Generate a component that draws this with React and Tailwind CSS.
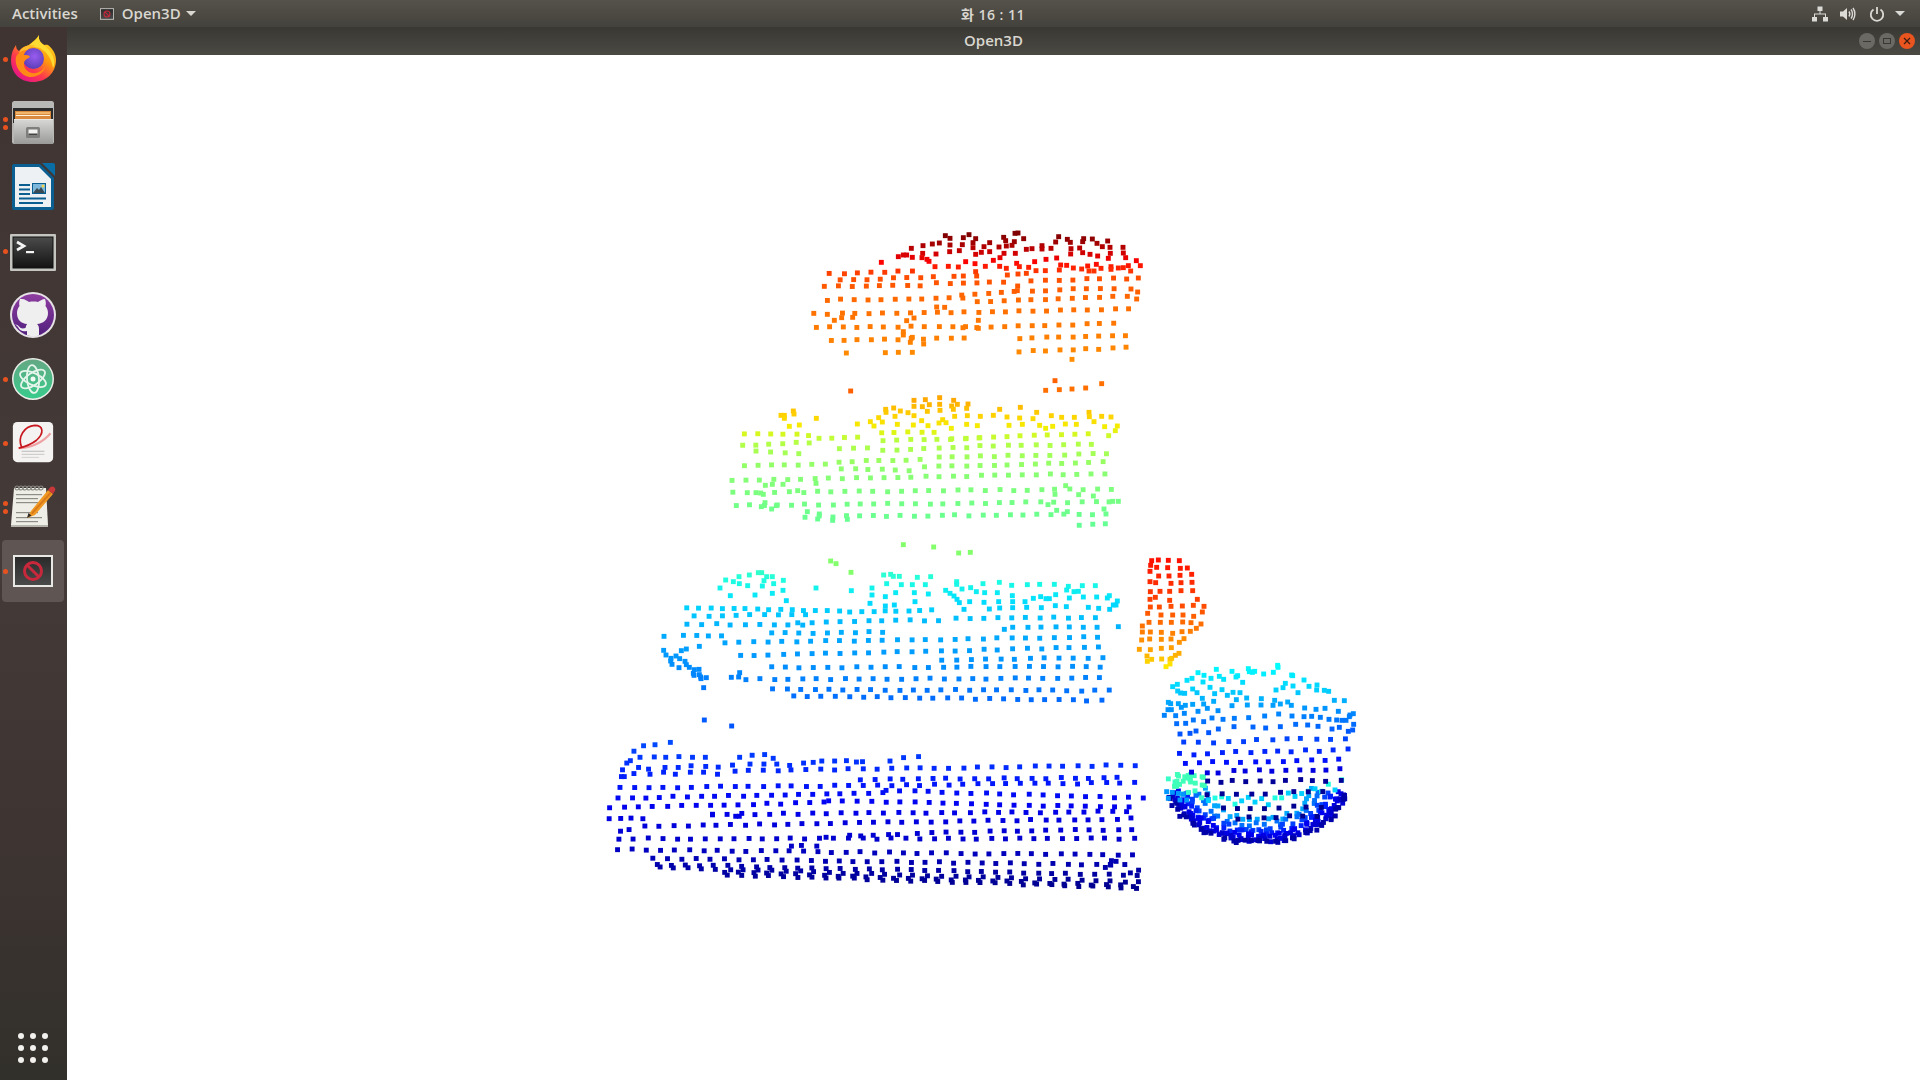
import { useMemo } from 'react';

// seeded random so the cloud stays the same between renders
const makeRandom = (seed) => () => {
  seed = (seed + 0x6d2b79f5) | 0;
  let t = Math.imul(seed ^ (seed >>> 15), 1 | seed);
  t = (t + Math.imul(t ^ (t >>> 7), 61 | t)) ^ t;
  return ((t ^ (t >>> 14)) >>> 0) / 4294967296;
};

const hex = (c) => [1, 3, 5].map((i) => parseInt(c.slice(i, i + 2), 16));

const ramp = (stops, v) => {
  if (v <= stops[0][0]) return stops[0][1];
  for (let i = 1; i < stops.length; i++) {
    if (v <= stops[i][0]) {
      const [a, ca] = stops[i - 1];
      const [b, cb] = stops[i];
      const k = (v - a) / (b - a);
      const x = hex(ca);
      const y = hex(cb);
      return `rgb(${x.map((n, j) => Math.round(n + (y[j] - n) * k)).join(',')})`;
    }
  }
  return stops[stops.length - 1][1];
};

const mainStops = [
  [235, '#800000'], [250, '#c00000'], [262, '#ff0000'], [275, '#ff4a00'], [300, '#ff6a00'], [345, '#ff8400'],
  [400, '#ffa800'], [415, '#ffd000'], [428, '#f4f000'], [440, '#b8ff40'], [470, '#8cff70'], [530, '#60ff98'],
  [565, '#40ffb8'], [580, '#20ffe0'], [600, '#00e0ff'], [625, '#00b4ff'], [665, '#0090ff'], [705, '#0064ff'],
  [745, '#0048ff'], [775, '#0020ff'], [805, '#0000f0'], [845, '#0000c8'], [887, '#000090'],
];
const towerStops = [[560, '#ff1000'], [600, '#ff4000'], [625, '#ff7000'], [645, '#ff9800'], [655, '#ffb000'], [665, '#ffe800']];
const bowlStops = [[665, '#00ffff'], [690, '#00d0ff'], [710, '#0090ff'], [735, '#0050ff'], [760, '#0010ff'], [790, '#0000e8'], [800, '#0000c8']];

const blockA = {
  ox: 800, oy: 220, sx: 3, sy: 3,
  pts: [[244,127],[295,110],[310,105],[320,105],[337,112],[334,85],[368,100],[369,77],[366,113],[381,118],[387,124],[408,102],[397,72],[418,69],[436,47],[450,55],[450,75],[449,95],[478,92],[487,74],[490,53],[507,44],[527,56],[519,68],[519,83],[527,103],[544,97],[552,80],[569,68],[569,95],[597,81],[611,52],[617,62],[619,78],[612,100],[600,113],[636,76],[643,65],[645,40],[654,39],[671,56],[646,100],[679,88],[696,86],[726,77],[726,87],[753,85],[767,66],[776,50],[802,58],[811,67],[813,86],[812,102],[839,84],[848,98],[848,65],[851,56],[877,57],[891,70],[907,80],[923,63],[930,82],[931,100],[925,115],[893,108],[870,103],[969,82],[970,99],[977,113],[1009,122],[1021,137],[985,137],[770,114],[738,118],[704,125],[650,130],[580,121],[497,125],[525,131],[556,139],[599,139],[619,145],[658,140],[686,142],[405,140],[445,139],[475,141],[782,135],[800,136],[820,144],[845,147],[863,138],[889,133],[903,145],[933,140],[955,144],[970,143],[992,153],[933,148],[778,150],[867,153],[882,153],[736,152],[708,152],[679,160],[654,162],[622,165],[527,155],[530,168],[490,168],[462,169],[400,170],[139,399],[256,398],[295,397],[337,397],[816,418],[535,301],[535,325],[410,261],[434,262],[103,301],[125,293],[158,292],[320,302],[342,294],[310,335],[310,345],[337,352],[331,367],[371,372],[1015,174],[980,177],[1013,216],[993,207],[1010,237],[982,229],[653,198],[652,212]],
  rows: [[90,365,162,152,41],[122,365,180,172,40],[695,945,181,176,41],[75,365,198,197,41],[410,610,190,185,40],[695,950,212,204,41],[485,650,224,216,40],[80,490,240,233,41],[530,970,244,230,41],[43,615,282,275,41],[617,1015,274,265,41],[47,500,322,318,41],[490,945,323,310,41],[92,495,360,355,40],[658,1015,355,345,40],[658,1012,395,382,40]],
};

const blockB = {
  ox: 720, oy: 370, sx: 3, sy: 3,
  pts: [[183,136],[193,136],[193,145],[220,123],[222,132],[289,145],[208,169],[238,165],[412,162],[451,155],[462,168],[476,143],[487,156],[497,118],[498,127],[521,114],[541,123],[564,128],[525,139],[582,137],[582,91],[582,109],[607,110],[616,89],[628,104],[622,124],[659,83],[659,103],[660,121],[701,91],[695,108],[712,103],[700,118],[744,102],[740,115],[605,152],[532,163],[580,165],[624,167],[657,159],[668,149],[678,158],[704,139],[742,137],[740,163],[694,175],[772,167],[781,139],[820,136],[839,118],[861,141],[901,112],[899,144],[939,146],[950,127],[994,137],[1025,142],[1063,142],[1107,127],[1108,140],[1145,139],[1173,141],[1122,155],[1036,162],[1069,163],[998,169],[977,175],[959,166],[907,163],[867,166],[1154,170],[1192,168],[1186,182],[1166,197],[136,346],[157,343],[189,343],[288,340],[233,362],[108,368],[130,373],[135,398],[169,407],[155,417],[124,410],[1005,373],[1037,347],[1076,374],[1120,378],[1010,421],[1042,425],[1152,417],[1178,394],[1195,394],[984,404],[298,432],[262,425],[293,447],[338,451],[382,448]],
  rows: [[73,272,192,195,39],[295,450,205,200,40],[484,655,187,188,40],[696,1118,205,190,41],[68,268,226,217,40],[488,780,212,205,41],[780,1155,228,222,42],[110,238,243,250,42],[358,445,235,233,42],[487,780,240,232,42],[656,1188,262,250,42],[72,320,287,283,41],[355,610,275,270,41],[616,1185,290,275,41],[364,584,296,302,41],[35,1190,330,310,41.5],[40,1192,368,357,42],[48,1190,406,395,41.5],[255,1190,440,432,41],[1076,1186,466,458,41]],
};

const blockC = {
  ox: 650, oy: 540, sx: 3, sy: 3,
  pts: [[227,120],[250,125],[267,110],[298,105],[325,98],[335,98],[350,110],[367,110],[400,121],[342,122],[268,131],[293,137],[337,138],[371,131],[210,144],[241,167],[315,165],[367,160],[399,151],[409,182],[498,144],[604,152],[666,144],[666,165],[706,170],[737,158],[793,158],[835,162],[710,131],[754,134],[787,134],[826,134],[701,105],[722,103],[730,109],[748,109],[802,112],[842,110],[920,125],[920,133],[936,147],[962,143],[979,155],[1004,158],[1042,158],[999,131],[1048,127],[1085,136],[1132,134],[1169,133],[1213,133],[1255,139],[1297,137],[1336,137],[1250,150],[1272,155],[1285,154],[1087,167],[1150,175],[1172,170],[1188,176],[1198,176],[1217,164],[1258,174],[1300,171],[1340,171],[1372,174],[1378,167],[1402,183],[1398,195],[1390,195],[887,151],[900,160],[912,168],[921,178],[928,188],[959,185],[1002,187],[1046,185],[1088,185],[1125,185],[660,190],[706,198],[733,195],[795,185],[942,208],[1018,207],[1049,204],[1088,203],[1130,202],[1174,203],[1216,197],[1249,200],[1315,202],[1346,205],[1379,208],[1405,260],[1063,268],[42,289],[41,331],[48,345],[63,355],[78,348],[89,356],[62,363],[66,373],[87,383],[105,364],[109,374],[118,382],[133,389],[147,388],[130,400],[132,406],[148,404],[152,411],[153,416],[169,413],[161,443],[94,332],[109,327],[148,319],[163,540],[245,558],[244,412],[266,411],[269,398]],
  rows: [[112,600,205,212,35],[600,870,215,210,35],[133,480,228,222,42],[918,1345,235,232,42],[445,875,247,240,42],[113,490,252,255,43],[1090,1380,260,262,42],[363,740,280,275,42],[100,225,285,290,38],[225,1380,308,290,43],[270,1385,347,320,43],[875,1385,360,352,44],[363,1380,382,380,43],[287,1380,418,414,42.5],[370,1380,448,452,42],[430,1376,468,482,42]],
};

const blockD = {
  ox: 600, oy: 720, sx: 2.8, sy: 2.95,
  pts: [[197,66],[154,73],[122,76],[95,92],[112,110],[152,109],[184,110],[221,108],[259,110],[295,110],[85,120],[75,127],[391,110],[426,104],[461,102],[485,113],[108,140],[63,147],[60,167],[68,167],[136,145],[182,140],[219,140],[255,135],[296,137],[331,139],[371,133],[420,130],[459,130],[495,130],[531,134],[570,127],[597,125],[621,121],[657,121],[690,120],[718,124],[735,123],[812,121],[850,111],[892,108],[95,158],[140,160],[178,154],[211,160],[253,154],[290,154],[329,160],[1432,415],[1445,417],[1430,428],[1415,435],[1485,451],[1508,443],[380,284],[390,284],[315,278],[633,346],[699,340],[730,342],[765,340],[808,338],[833,338],[536,372],[564,370],[607,372]],
  rows: [[377,1500,150,133,40],[730,1480,175,170,40],[57,1520,200,185,40],[50,800,230,215,39],[800,1520,208,230,40],[28,640,258,243,40],[640,1490,238,258,40],[315,1490,278,270,40],[25,150,292,290,32],[127,1525,314,290,40],[55,100,328,322,25],[55,1528,350,350,40],[890,1495,333,322,40],[50,1500,382,399,40],[150,1500,408,428,40],[160,1510,426,458,39.5],[166,1516,434,478,39.5],[350,1510,448,490,39.5],[355,1516,456,496,39.5]],
};

const towerPts = [[65,32],[85,30],[115,31],[148,32],[62,46],[80,52],[113,53],[151,55],[172,54],[60,64],[86,78],[117,78],[150,76],[185,73],[60,95],[77,98],[123,100],[153,98],[186,97],[61,125],[90,124],[119,124],[153,122],[188,122],[60,148],[76,142],[119,151],[202,148],[61,171],[88,171],[123,169],[157,168],[190,166],[222,169],[53,190],[93,195],[128,195],[159,195],[191,199],[217,186],[57,217],[91,217],[124,217],[158,216],[183,218],[213,222],[37,228],[37,246],[61,246],[94,247],[128,250],[156,245],[181,244],[199,235],[35,270],[59,267],[94,268],[123,267],[162,266],[148,277],[28,298],[61,299],[94,295],[124,293],[51,318],[65,328],[52,334],[95,327],[120,328],[125,325],[136,316],[147,310],[120,342],[108,350]];

const bowlPts = [[128,410],[142,403],[171,391],[186,385],[204,368],[222,376],[219,396],[243,385],[259,358],[268,379],[281,388],[306,364],[318,381],[323,377],[338,397],[355,356],[358,365],[367,367],[374,364],[401,372],[430,367],[444,352],[443,346],[485,375],[488,377],[522,390],[466,400],[459,413],[438,420],[489,408],[504,428],[537,409],[561,405],[560,420],[583,421],[596,424],[613,451],[643,452],[143,423],[152,429],[164,430],[188,417],[201,428],[240,412],[276,419],[254,431],[217,445],[330,428],[309,427],[292,436],[319,449],[350,444],[394,446],[434,451],[473,456],[524,474],[558,478],[585,475],[625,484],[115,457],[122,461],[145,461],[166,466],[154,472],[188,463],[221,462],[251,454],[232,475],[204,484],[264,482],[306,467],[352,465],[393,465],[429,466],[451,462],[484,466],[114,479],[124,479],[103,496],[137,497],[163,490],[190,510],[221,515],[246,504],[279,508],[313,505],[356,503],[404,498],[446,492],[486,498],[522,500],[545,499],[571,502],[597,508],[620,510],[636,511],[648,511],[660,495],[670,491],[658,500],[671,523],[668,540],[655,544],[628,532],[606,537],[564,529],[533,525],[497,523],[451,530],[407,534],[369,531],[312,530],[265,537],[236,548],[198,543],[180,550],[150,552],[140,521],[167,520]];

// fixed colours: stray points that do not follow the height ramp
const strays = [
  ...[[392,63],[1005,32]].map(([x, y]) => [720 + x / 3, 370 + y / 3, '#ff6000']),
  ...[[977,61],[1018,59],[1056,57],[1097,54],[1145,41]].map(([x, y]) => [720 + x / 3, 370 + y / 3, '#ff7000']),
  ...[[760,14],[851,21],[926,39],[961,37],[542,63],[558,71],[603,97]].map(([x, y]) => [650 + x / 3, 540 + y / 3, '#84ff6c']),
];

const buildCloud = () => {
  const rnd = makeRandom(7);
  const out = [];
  const jig = (n) => (rnd() - 0.5) * n;
  for (const b of [blockA, blockB, blockC, blockD]) {
    const all = [...b.pts];
    for (const [x0, x1, y0, y1, step] of b.rows) {
      for (let x = x0; x <= x1; x += step) {
        const k = (x - x0) / Math.max(1, x1 - x0);
        all.push([x + jig(5), y0 + (y1 - y0) * k + jig(4)]);
      }
    }
    for (const [x, y] of all) {
      const py = b.oy + y / b.sy;
      out.push([b.ox + x / b.sx, py, ramp(mainStops, py)]);
    }
  }
  for (const [x, y] of towerPts) {
    const py = 550 + y / 3;
    out.push([1130 + x / 3, py, ramp(towerStops, py)]);
  }
  const bowl = [...bowlPts];
  for (const [x0, x1, y0, y1, step] of [[162,665,578,565,44],[150,660,612,600,42],[165,640,640,630,42]]) {
    for (let x = x0; x <= x1; x += step) {
      bowl.push([x + jig(6), y0 + (y1 - y0) * ((x - x0) / (x1 - x0)) + jig(8)]);
    }
  }
  for (const [x, y] of bowl) {
    const py = 550 + y / 3;
    out.push([1130 + x / 3, py, ramp(bowlStops, py)]);
  }
  // lower cup, rings from the inner wall out to the dark bottom edge
  for (const [k, c, n] of [[0.62,'#00a8ff',20],[0.7,'#0070ff',22],[0.78,'#0040ff',26],[0.84,'#0020ff',28],[0.89,'#0000f0',32],[0.93,'#0000e0',36],[0.965,'#0000d0',38],[1,'#0000a8',42]]) {
    for (let i = 0; i <= n; i++) {
      const a = 0.2 + ((Math.PI - 0.4) * i) / n + jig(0.08);
      out.push([1130 + (385 + 270 * k * Math.cos(a) + jig(14)) / 3, 550 + (700 + 178 * k * Math.sin(a) + jig(14)) / 3, c]);
    }
  }
  // teal rim that bends down in front of the bowl
  for (let x = 115; x <= 640; x += 20) {
    const y = 700 + 55 * Math.sin((Math.PI * (x - 105)) / 540) + jig(34);
    const c = x < 230 ? '#38ffc8' : rnd() > 0.5 ? '#20ffe0' : '#00d0ff';
    out.push([1130 + x / 3, 550 + y / 3, c]);
  }
  for (let i = 0; i < 24; i++) {
    out.push([1130 + (130 + rnd() * 95) / 3, 550 + (668 + rnd() * 42) / 3, '#40ffb8']);
  }
  for (const [x, y] of [[110,725],[127,727],[145,730],[115,745],[150,750],[170,750],[160,733]]) {
    out.push([1130 + x / 3, 550 + y / 3, '#0098ff']);
  }
  // dark points of the back wall seen through the rim
  for (const [x0, x1, y0, y1, step, c] of [[188,640,668,655,40,'#0000e0'],[230,640,695,690,40,'#000098'],[230,620,735,725,44,'#000098'],[280,600,775,770,42,'#000090'],[320,570,805,795,40,'#000090']]) {
    for (let x = x0; x <= x1; x += step) {
      out.push([1130 + (x + jig(8)) / 3, 550 + (y0 + (y1 - y0) * ((x - x0) / (x1 - x0)) + jig(8)) / 3, c]);
    }
  }
  return [...out, ...strays];
};

const PointCloud = () => {
  const points = useMemo(buildCloud, []);
  return (
    <svg viewBox="67 55 1853 1025" className="block w-full h-full">
      {points.map(([x, y, c], i) => (
        <rect key={i} x={x - 2.45} y={y - 2.45} width="4.9" height="4.9" fill={c} />
      ))}
    </svg>
  );
};

const Firefox = () => (
  <svg viewBox="0 0 48 48" className="w-[48px] h-[48px]">
    <defs>
      <linearGradient id="ffa" x1="0.85" y1="0.05" x2="0.2" y2="0.95">
        <stop offset="0" stopColor="#ffe226" />
        <stop offset="0.4" stopColor="#ff980e" />
        <stop offset="0.7" stopColor="#ff3750" />
        <stop offset="1" stopColor="#e31587" />
      </linearGradient>
      <radialGradient id="ffb" cx="0.55" cy="0.4" r="0.6">
        <stop offset="0" stopColor="#9a5cf0" />
        <stop offset="1" stopColor="#5a3fb8" />
      </radialGradient>
    </defs>
    <path d="M30 0c-1 5 2 8 5 10 2-.5 3-.5 4 0 5 4 8 9 8 15 0 13-10 22-23 22C11 47 2 38 2 25c0-6 2-11 5-15 0 3 1 5 3 6 2-3 6-5 10-6 3-3 7-5 10-10z" fill="url(#ffa)" />
    <path d="M30 0c-1 5 2 8 5 10 5 4 9 9 10 15 1 3 0 6-1 8-1-9-6-16-13-20-4-1-7-1-11-3 4-3 8-5 10-10z" fill="#ffdc34" />
    <circle cx="24.500" cy="23.500" r="10.500" fill="url(#ffb)" />
    <path d="M7 22c2-4 6-7 11-7-2 2-3 3-3 5 3 0 5 0 6 2-3 2-6 3-6 7 0 6 6 10 12 9 4-1 7-3 9-7 0 7-8 11-14 11C13 42 5 32 7 22z" fill="#ff8a16" />
    <path d="M15 12c4-2 8-3 12-1-4 0-7 2-9 4-3 0-6 1-8 3 1-3 3-5 5-6z" fill="#ffbd2e" />
  </svg>
);

const Files = () => (
  <svg viewBox="0 0 48 48" className="w-[48px] h-[48px]">
    <defs>
      <linearGradient id="fca" x1="0" y1="0" x2="0" y2="1">
        <stop offset="0" stopColor="#d8d8d6" />
        <stop offset="1" stopColor="#9a9a98" />
      </linearGradient>
    </defs>
    <rect x="3" y="2" width="42" height="43" rx="2.500" fill="#b8b8b6" />
    <rect x="4" y="9" width="40" height="15" fill="#2c2c2c" />
    <path d="M6 12h36v12H6z" fill="#d98a3c" />
    <path d="M7 13h34v2H7z" fill="#f0b46a" />
    <path d="M7 16h34v1H7z" fill="#fff1dc" />
    <rect x="5" y="20" width="39" height="25" rx="1.500" fill="url(#fca)" />
    <rect x="5" y="20" width="39" height="1" fill="#e8e8e6" />
    <rect x="17" y="28" width="14" height="11" rx="1.500" fill="#7e7e7c" />
    <rect x="19.500" y="30.500" width="9" height="5.500" fill="#f2f2f0" />
    <rect x="19.500" y="34.500" width="9" height="1.500" fill="#444" />
  </svg>
);

const Writer = () => (
  <svg viewBox="0 0 48 48" className="w-[48px] h-[48px]">
    <path d="M5 1h26l14 14v30a2 2 0 0 1-2 2H5a2 2 0 0 1-2-2V3a2 2 0 0 1 2-2z" fill="#0a5e90" />
    <path d="M33 0h11a2 2 0 0 1 2 2v11z" fill="#0a6ea6" />
    <path d="M6 4h24l12 12v28H6z" fill="#eef1f4" />
    <rect x="10" y="21" width="11" height="2" fill="#0a5e90" />
    <rect x="10" y="25.500" width="11" height="2" fill="#0a5e90" />
    <rect x="10" y="30" width="11" height="2" fill="#0a5e90" />
    <rect x="10" y="34.500" width="27" height="2" fill="#0a5e90" />
    <rect x="10" y="39" width="24" height="2" fill="#0a5e90" />
    <rect x="23" y="20" width="14" height="11" fill="#0a5e90" />
    <rect x="24" y="21" width="12" height="9" fill="#7db8dc" />
    <path d="M24 30l4-5 2 2 2-3 4 6z" fill="#3a4a52" />
    <circle cx="34" cy="23" r="1.500" fill="#f2d24a" />
  </svg>
);

const Terminal = () => (
  <svg viewBox="0 0 48 40" className="w-[48px] h-[40px] translate-y-[2px]">
    <defs>
      <linearGradient id="tma" x1="0" y1="0" x2="0" y2="1">
        <stop offset="0" stopColor="#4a4a4a" />
        <stop offset="1" stopColor="#141414" />
      </linearGradient>
    </defs>
    <rect x="1" y="1" width="46" height="37" rx="1" fill="#c4c4c0" />
    <rect x="3.500" y="3.500" width="41" height="32" fill="#111" />
    <rect x="4.500" y="4.500" width="39" height="30" fill="url(#tma)" />
    <path d="M8 9l7 4-7 4" stroke="#f4f4f4" strokeWidth="2.600" fill="none" />
    <rect x="17" y="18" width="8" height="2.200" fill="#f4f4f4" />
  </svg>
);

const Github = () => (
  <svg viewBox="0 0 48 48" className="w-[48px] h-[48px]">
    <defs>
      <linearGradient id="gha" x1="0" y1="0" x2="0" y2="1">
        <stop offset="0" stopColor="#8e3da0" />
        <stop offset="1" stopColor="#52207e" />
      </linearGradient>
    </defs>
    <circle cx="24" cy="24" r="23" fill="#e6e2e6" />
    <circle cx="24" cy="24" r="21" fill="url(#gha)" />
    <path d="M13 8c3 0 5 2 7 3 3-.6 6-.6 9 0 2-1 4-3 7-3 1 3 1 5 .5 7 1.500 2 2.500 4 2.500 7 0 7-5 10.500-11 11 1.500 1 2 3 2 5v6.500c-2.500.8-7.500.8-12 0V40c-4 1-7 0-9-4-1-1-2-2-3-2.500 2 0 3 .8 4 2 1.500 2 3.500 2.500 6.500 1.500.3-1.500.8-3 1.700-4-6-.5-10.200-4-10.200-11 0-3 1-5 2.500-7-.5-2-.5-4 .5-7z" fill="#efeff0" />
  </svg>
);

const Atom = () => (
  <svg viewBox="0 0 48 48" className="w-[48px] h-[48px]">
    <defs>
      <linearGradient id="ata" x1="0" y1="0" x2="0" y2="1">
        <stop offset="0" stopColor="#64a884" />
        <stop offset="1" stopColor="#38cb8b" />
      </linearGradient>
    </defs>
    <circle cx="24" cy="24" r="21" fill="#eceee9" />
    <circle cx="24" cy="24" r="19.500" fill="url(#ata)" />
    <g fill="none" stroke="#e6f5ec" strokeWidth="1.800">
      <ellipse cx="24" cy="24" rx="14" ry="6" transform="rotate(25 24 24)" />
      <ellipse cx="24" cy="24" rx="14" ry="6" transform="rotate(-35 24 24)" />
      <ellipse cx="24" cy="24" rx="14" ry="6" transform="rotate(85 24 24)" />
    </g>
    <circle cx="24" cy="24" r="2.500" fill="#f2fbf5" />
  </svg>
);

const Pdf = () => (
  <svg viewBox="0 0 48 48" className="w-[42px] h-[42px] -translate-y-[1px]">
    <rect x="1" y="1" width="46" height="46" rx="5" fill="#f4f3f1" />
    <path d="M7 31c14 0 28-6 37-17" stroke="#eea0a2" strokeWidth="2.400" fill="none" />
    <path d="M11 30C6 18 14 6 26 5c10 0 11 9 2 17-5 4-12 7-20 9" stroke="#c8181f" strokeWidth="1.900" fill="none" />
    <rect x="11" y="34" width="26" height="1.200" fill="#bcbcbc" />
    <rect x="11" y="37.500" width="26" height="1.200" fill="#c8c8c8" />
    <rect x="11" y="41" width="20" height="1.200" fill="#d2d2d2" />
  </svg>
);

const Notepad = () => (
  <svg viewBox="0 0 48 48" className="w-[48px] h-[48px]">
    <path d="M5 5h32l2 37H2z" fill="#eeeee6" />
    <path d="M2 42h37v2H2z" fill="#b5b5ac" />
    {[8, 12, 16, 20, 24, 28, 32].map((x) => (
      <circle key={x} cx={x} cy="5" r="2" fill="none" stroke="#8a8a84" strokeWidth="1.200" />
    ))}
    {[11, 15, 19, 29, 34, 38].map((y, i) => (
      <rect key={y} x="7" y={y} width={i % 2 ? 22 : 26} height="1.200" fill="#8e8e88" />
    ))}
    <path d="M18 35l4-7L39 7l5 4-18 21z" fill="#f09a24" />
    <path d="M39 7l2.500-3c1.500-1 3-.5 4 .5s1.200 3 0 4l-1.500 2.500z" fill="#c8383a" />
    <path d="M18 35l1.500-5 3 2.500z" fill="#2f2a26" />
    <path d="M22 30l19-21 1.500 1.200-19 21z" fill="#d9791a" />
  </svg>
);

const Blocked = ({ small }) => (
  <svg viewBox="0 0 40 32" className={small ? 'w-[14px] h-[12px]' : 'w-[40px] h-[32px]'}>
    <defs>
      <linearGradient id={small ? 'bla' : 'blb'} x1="0" y1="0" x2="0" y2="1">
        <stop offset="0" stopColor="#2a2a2a" />
        <stop offset="1" stopColor="#4a4a4a" />
      </linearGradient>
    </defs>
    <rect x="0" y="0" width="40" height="32" fill="#e8e8e4" />
    <rect x="2" y="2" width="36" height="28" fill={`url(#${small ? 'bla' : 'blb'})`} />
    <circle cx="20" cy="16" r="8.500" fill="none" stroke="#c8283c" strokeWidth="3" />
    <path d="M14 10l12 12" stroke="#c8283c" strokeWidth="3" />
  </svg>
);

const dockItems = [
  { icon: <Firefox />, dots: 1 },
  { icon: <Files />, dots: 2 },
  { icon: <Writer />, dots: 0 },
  { icon: <Terminal />, dots: 1 },
  { icon: <Github />, dots: 0 },
  { icon: <Atom />, dots: 1 },
  { icon: <Pdf />, dots: 1 },
  { icon: <Notepad />, dots: 2 },
  { icon: <Blocked />, dots: 1, active: true },
];

const DockItem = ({ icon, dots, active }) => (
  <div className="relative h-[64px] pr-[1px] flex items-center justify-center">
    {active && <div className="absolute left-[2px] right-[3px] top-[1px] bottom-[1px] rounded-[4px] bg-[#5f5553]" />}
    <div className="absolute left-[3px] top-0 bottom-0 flex flex-col justify-center gap-[3px]">
      {Array.from({ length: dots }).map((_, i) => (
        <div key={i} className="w-[5px] h-[5px] rounded-full bg-[#e8521f]" />
      ))}
    </div>
    <div className="relative">{icon}</div>
  </div>
);

const StatusIcons = () => (
  <div className="flex items-center text-[#dcdad5]">
    <svg viewBox="0 0 16 16" className="w-[16px] h-[16px]" fill="currentColor">
      <rect x="5.500" y="0.500" width="5" height="4.500" />
      <rect x="7.500" y="5" width="1" height="3" />
      <rect x="2" y="7.500" width="12" height="1" />
      <rect x="2" y="8" width="1" height="3" />
      <rect x="13" y="8" width="1" height="3" />
      <rect x="0" y="11" width="5" height="4.500" />
      <rect x="11" y="11" width="5" height="4.500" />
    </svg>
    <svg viewBox="0 0 16 16" className="w-[16px] h-[16px] ml-[12px]" fill="none" stroke="currentColor">
      <path d="M0 5.500h3L7 2v12L3 10.500H0z" fill="currentColor" stroke="none" />
      <path d="M9 5.500c1 1.500 1 3.500 0 5" strokeWidth="1.400" />
      <path d="M11 3.500c2 2.500 2 6.500 0 9" strokeWidth="1.400" />
      <path d="M13 2c2.500 3.500 2.500 8.500 0 12" strokeWidth="1.400" />
    </svg>
    <svg viewBox="0 0 16 16" className="w-[16px] h-[16px] ml-[13px]" fill="none" stroke="currentColor" strokeWidth="1.800">
      <path d="M8 1v7" />
      <path d="M4.500 3.500a6.200 6.200 0 1 0 7 0" />
    </svg>
    <div className="ml-[10px] mr-[15px] w-0 h-0 border-x-[5px] border-x-transparent border-t-[5px] border-t-[#dcdad5]" />
  </div>
);

const WindowButton = ({ close, children }) => (
  <div className={`w-[16px] h-[16px] rounded-full flex items-center justify-center ${close ? 'bg-[#e9541f]' : 'bg-[#6a6963]'}`}>
    {children}
  </div>
);

const App = () => (
  <div className="w-[1920px] h-[1080px] overflow-hidden flex flex-col bg-white font-['Open_Sans','Noto_Sans_CJK_KR',sans-serif]">
    <div className="h-[27px] shrink-0 flex items-center text-[14px] font-semibold text-[#d9d7d0] bg-gradient-to-b from-[#55524b] to-[#44423c]">
      <div className="w-[300px] flex items-center text-[15px]">
        <span className="ml-[12px]">Activities</span>
        <span className="ml-[22px]"><Blocked small /></span>
        <span className="ml-[8px]">Open3D</span>
        <div className="ml-[5px] w-0 h-0 border-x-[5px] border-x-transparent border-t-[5px] border-t-[#d9d7d0]" />
      </div>
      <div className="flex-1 text-center tracking-[0.5px] pt-[1px]">화 16 : 11</div>
      <div className="w-[234px] flex justify-end"><StatusIcons /></div>
    </div>
    <div className="flex-1 flex min-h-0">
      <div className="w-[67px] shrink-0 flex flex-col justify-between bg-[linear-gradient(180deg,#3f3432_0%,#443a38_50%,#3e3533_76%,#38322e_88%,#32302b_100%)]">
        <div>
          {dockItems.map((item, i) => (
            <DockItem key={i} {...item} />
          ))}
        </div>
        <div className="grid grid-cols-3 gap-x-[6px] gap-y-[6px] w-[30px] ml-[18px] mb-[17px]">
          {Array.from({ length: 9 }).map((_, i) => (
            <div key={i} className="w-[6px] h-[6px] rounded-full bg-[#f2f1ee]" />
          ))}
        </div>
      </div>
      <div className="flex-1 flex flex-col min-w-0">
        <div className="h-[28px] shrink-0 relative flex items-center justify-center pb-[2px] text-[15px] font-semibold text-[#d9d7d0] bg-gradient-to-b from-[#3a3833] to-[#4b4943]">
          <span>Open3D</span>
          <div className="absolute right-[5px] top-[6px] flex gap-[4px]">
            <WindowButton><div className="w-[8px] h-[1px] bg-[#3a3833]" /></WindowButton>
            <WindowButton><div className="w-[8px] h-[6px] border border-[#3a3833]" /></WindowButton>
            <WindowButton close>
              <svg viewBox="0 0 8 8" className="w-[8px] h-[8px]" stroke="#3a1c10" strokeWidth="1.200"><path d="M1 1l6 6M7 1L1 7" /></svg>
            </WindowButton>
          </div>
        </div>
        <div className="flex-1 min-h-0 bg-white">
          <PointCloud />
        </div>
      </div>
    </div>
  </div>
);

export default App;
